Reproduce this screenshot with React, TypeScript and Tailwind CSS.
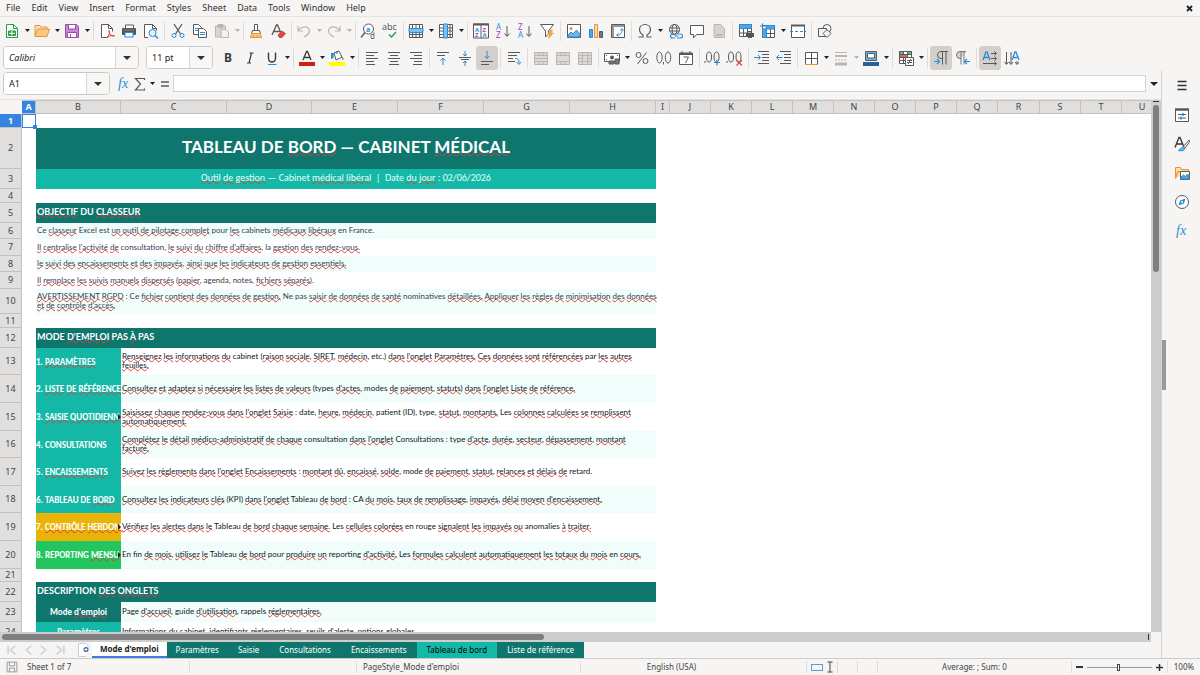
import { Fragment, type ReactNode } from 'react';

const menus = ['File', 'Edit', 'View', 'Insert', 'Format', 'Styles', 'Sheet', 'Data', 'Tools', 'Window', 'Help'];

const INK = '#595959';
const BLUE = '#2a8dd4';
const ORANGE = '#e8923a';
const GRAY = '#b9b7b5';

const icons: Record<string, ReactNode> = {
  new: (
    <>
      <path d="M2.500 1.500h7l4 4v9h-11z" fill="#fff" stroke="#2f9a4c" />
      <path d="M9.500 1.500v4h4" stroke="#2f9a4c" />
      <path d="M4.500 8h7v4.500h-7z" fill="#2f9a4c" stroke="#2f9a4c" />
      <path d="M5 10.300h6M7.800 8v4.500" stroke="#fff" />
    </>
  ),
  open: (
    <>
      <path d="M1 13V2.500h5l1 1.500h6v3" fill="#fbe0b5" stroke={ORANGE} />
      <path d="M1 13.500l2.500-7.500h12l-2.500 7.500z" fill="#f8c983" stroke={ORANGE} />
    </>
  ),
  save: (
    <>
      <path d="M1.500 1.500h11l2 2v11h-13z" fill="#c887d6" stroke="#9d4bb0" />
      <path d="M4.500 1.500h7v4.500h-7zM3.500 9.500h9v5h-9z" fill="#fff" stroke="#9d4bb0" />
      <path d="M6.500 11v3" stroke="#9d4bb0" />
    </>
  ),
  pdf: (
    <>
      <path d="M9 14.500H2.500v-13h7l4 4v3" fill="#fff" stroke={INK} />
      <path d="M9.500 1.500v4h4" stroke={INK} />
      <path d="M7.500 14.500c3-2 3.500-5 2.500-7c-.500 3 2 5.500 5.500 5.500c-3-1-6 0-8 1.500z" stroke="#d93a3a" />
    </>
  ),
  print: (
    <>
      <path d="M4.500 5V2h8v3" fill="#fff" stroke={INK} />
      <rect x="1" y="5" width="14" height="7" rx="1" fill="#555" />
      <rect x="4" y="9.500" width="8" height="4.500" fill="#fff" stroke={BLUE} />
      <path d="M3 7h10" stroke="#888" />
    </>
  ),
  preview: (
    <>
      <path d="M5 14.500H1.500v-13h8l4 4v2" fill="#fff" stroke={INK} />
      <path d="M9.500 1.500v4h4" stroke={INK} />
      <circle cx="9.500" cy="10" r="3.500" fill="#e3f2fc" stroke={BLUE} />
      <path d="M12 12.500l3 3" stroke={BLUE} strokeWidth="1.500" />
    </>
  ),
  cut: (
    <>
      <path d="M4 1l6.500 10M12 1L5.500 11" stroke={INK} strokeWidth="1.300" />
      <circle cx="4" cy="12.500" r="2" stroke={BLUE} />
      <circle cx="12" cy="12.500" r="2" stroke={BLUE} />
    </>
  ),
  copy: (
    <>
      <path d="M1.500 1.500h5l3 3v7h-8z" fill="#fff" stroke={INK} />
      <path d="M3 5.500h3M3 7.500h3" stroke={BLUE} />
      <path d="M6.500 5.500h5l3 3v6h-8z" fill="#fff" stroke={INK} />
      <path d="M8 9.500h5M8 11.500h5" stroke={BLUE} />
    </>
  ),
  paste: (
    <>
      <path d="M1.500 3h10v11h-10z" fill="#d8d6d4" stroke={GRAY} />
      <path d="M4 1.500h5v3H4z" fill={GRAY} stroke={GRAY} />
      <path d="M7 6.500h5l2.500 2.500v5.500H7z" fill="#f2f1f0" stroke={GRAY} />
    </>
  ),
  clone: (
    <>
      <path d="M6.500 1.500h3v6h-3z" fill="#fff" stroke={INK} />
      <path d="M4.500 7.500h7l1 3h-9z" fill="#fff" stroke={INK} />
      <path d="M3.500 10.500h9l1 4H2.500z" fill="#f8c983" stroke={ORANGE} />
      <path d="M6 12v2.500M9 12v2.500" stroke={ORANGE} />
    </>
  ),
  clear: (
    <>
      <path d="M2 12L6.500 2h1L11 10M4 8.500h6" stroke={INK} strokeWidth="1.300" />
      <path d="M8 12l4-4 3.500 2.500-3.500 4H9.500z" fill="#e04444" stroke="#e04444" />
    </>
  ),
  undo: <path d="M2 3v5h5M2 8c3-5 9-5 11-2c1.500 3-1 6-5 8" stroke={GRAY} strokeWidth="1.200" />,
  redo: <path d="M14 3v5H9M14 8c-3-5-9-5-11-2c-1.500 3 1 6 5 8" stroke={GRAY} strokeWidth="1.200" />,
  find: (
    <>
      <circle cx="8.500" cy="6" r="5" fill="#fff" stroke={INK} />
      <path d="M5 9.500L1 14.500" stroke={INK} strokeWidth="1.400" />
      <text x="6" y="8.500" fontSize="7" fill={BLUE} fontWeight="700">a</text>
      <text x="10" y="15.500" fontSize="8" fill={INK}>d</text>
    </>
  ),
  spell: (
    <>
      <text x="0" y="7" fontSize="9" fill={INK}>abc</text>
      <path d="M7 11.500l2.500 2.500 4.500-5" stroke="#2fa05a" strokeWidth="1.500" />
    </>
  ),
  row: (
    <>
      <path d="M1.500 1.500h13v13h-13zM1.500 11.500h13M4.500 1.500v13M8 1.500v13M11.500 1.500v13" fill="#fff" stroke={INK} />
      <path d="M1 5.500h14v4H1z" fill="#7cc0f0" stroke={BLUE} />
    </>
  ),
  column: (
    <>
      <path d="M1.500 1.500h13v13h-13zM1.500 5h13M1.500 8h13M1.500 11.500h13M12 1.500v13" fill="#fff" stroke={INK} />
      <path d="M5.500 1h4v14h-4z" fill="#7cc0f0" stroke={BLUE} />
    </>
  ),
  sort: (
    <>
      <path d="M.500 1h15v14H.500zM8 1v14" fill="#fff" stroke={INK} />
      <path d="M0 1.500h16" stroke={INK} strokeWidth="2" />
      <g fontSize="6" fontWeight="700">
        <text x="2" y="8.500" fill={BLUE}>A</text>
        <text x="2" y="14" fill="#a33fb5">Z</text>
        <text x="9.500" y="8.500" fill="#a33fb5">Z</text>
        <text x="9.500" y="14" fill={BLUE}>A</text>
      </g>
    </>
  ),
  asc: (
    <>
      <text x="1" y="7" fontSize="8" fill={BLUE}>A</text>
      <text x="1" y="15" fontSize="8" fill="#a33fb5">Z</text>
      <path d="M12 3v10M9.500 10.500L12 13.500l2.500-3" stroke={INK} />
    </>
  ),
  desc: (
    <>
      <text x="1" y="7" fontSize="8" fill="#a33fb5">Z</text>
      <text x="1" y="15" fontSize="8" fill={BLUE}>A</text>
      <path d="M12 3v10M9.500 10.500L12 13.500l2.500-3" stroke={INK} />
    </>
  ),
  filter: (
    <>
      <path d="M1.500 1.500h13L9.500 8v3l-3 3V8z" fill="#fff" stroke={INK} />
      <path d="M11.500 7L8.500 11.500h2L9.500 15.500l5-5.500h-2.500l1.500-3z" fill="#f5a84c" stroke={ORANGE} strokeWidth=".6" />
    </>
  ),
  image: (
    <>
      <path d="M1.500 1.500h13v13h-13z" fill="#fff" stroke={INK} />
      <circle cx="5" cy="5.500" r="1.500" fill={ORANGE} />
      <path d="M2 14v-2l3-3 2 2 3.500-4L14 11v3z" fill="#6cb5ea" stroke={BLUE} />
    </>
  ),
  chart: (
    <>
      <path d="M1.500 6.500h3v8h-3z" fill="#4fa5e3" stroke={BLUE} />
      <path d="M6.500 1.500h3v13h-3z" fill="#fbd9ae" stroke={ORANGE} />
      <path d="M11.500 8.500h3v6h-3z" fill="#777" stroke={INK} />
    </>
  ),
  pivot: (
    <>
      <path d="M1.500 1.500h13v13h-13z" fill="#fff" stroke={INK} />
      <path d="M2 3h12M3 2v12" stroke="#999" strokeWidth="2" />
      <path d="M7 12c4 0 5-2 5-6M10.500 7.500L12 5.500l1.500 2M8.500 10.500L6.500 12l2 1.500" stroke={BLUE} />
    </>
  ),
  omega: <path d="M1.500 14H6v-2C3.500 10.500 2.500 9 2.500 6.500C2.500 3.500 5 1.500 8 1.500s5.500 2 5.500 5c0 2.500-1 4-3.500 5.500v2h4.500" stroke={INK} strokeWidth="1.200" />,
  link: (
    <>
      <circle cx="7.500" cy="6.500" r="5" stroke={INK} />
      <ellipse cx="7.500" cy="6.500" rx="2.300" ry="5" stroke={INK} />
      <path d="M2.500 5h10M2.500 8h10" stroke={INK} />
      <path d="M9 11H5.500a2 2 0 0 0 0 4H8M11 11h2.500a2 2 0 0 1 0 4H10M7.500 13h4" stroke={BLUE} strokeWidth="1.200" />
    </>
  ),
  comment: <path d="M1.500 2.500h13v9H7.500l-3 3.500v-3.500h-3z" fill="#fff" stroke={INK} />,
  headers: (
    <>
      <path d="M3 1.500h6.500l4 4v9H3z" fill="#d5d3d1" stroke={GRAY} />
      <path d="M5 11h6.500v2H5z" fill={GRAY} />
    </>
  ),
  range: (
    <>
      <path d="M1.500 1.500h12v12h-12zM1.500 10h12M5.500 1.500v12M9.500 1.500v12" fill="#fff" stroke={INK} />
      <path d="M1.500 1.500h12v4h-12z" fill="#4fa5e3" stroke={BLUE} />
      <path d="M8 10h8v4H8z" fill="#555" />
      <path d="M10 8.500h4M10 14.500h4" stroke={INK} />
    </>
  ),
  freeze: (
    <>
      <path d="M2.500 2.500h12v12h-12zM10.500 2.500v12M6.500 10.500h8" fill="#fff" stroke={INK} />
      <path d="M2.500 6h4v8.500h-4zM6 2.500h8.500V6H6z" fill="#4fa5e3" stroke={BLUE} />
      <path d="M0 3h5M2.500 .500v5" stroke={BLUE} strokeWidth="1.200" />
    </>
  ),
  split: (
    <>
      <path d="M1.500 2.500h13v12h-13z" fill="#fff" stroke={INK} />
      <path d="M1 2.500h14" stroke={INK} strokeWidth="2" />
      <path d="M0 8.500h16" stroke={BLUE} strokeDasharray="3 2" />
    </>
  ),
  shapes: (
    <>
      <circle cx="10" cy="5.500" r="4" fill="#f6f5f4" stroke={INK} />
      <path d="M1.500 5.500h8v8h-8z" fill="#f6f5f4" stroke={INK} />
      <path d="M10 6.500l4 4-4 4-4-4z" fill="#f6f5f4" stroke={INK} />
    </>
  ),
  bold: <text x="4" y="12" fontSize="12" fontWeight="700" fill="#3a3a3a">B</text>,
  italic: <path d="M7.500 3h4M5 13h4M9.500 3L7 13" stroke="#3a3a3a" strokeWidth="1.200" />,
  underline: (
    <>
      <path d="M4.500 2.500v6a3.500 3.500 0 0 0 7 0v-6" stroke="#3a3a3a" strokeWidth="1.400" />
      <path d="M4 14.500h8.500" stroke={BLUE} />
    </>
  ),
  fontColor: (
    <>
      <path d="M4 10L7.500 1.500h1L12 10M5.500 7.500h5" stroke="#3a3a3a" strokeWidth="1.300" />
      <path d="M0 12h16v4H0z" fill="#c9211e" />
    </>
  ),
  highlight: (
    <>
      <path d="M5 3l5-2 3 6-6 3z" fill="#fff" stroke={INK} />
      <path d="M8 4V1M13 7c1 1 1.500 2 .500 3" stroke={INK} />
      <path d="M2 9V3h4L4.500 5v3z" fill={BLUE} />
      <path d="M0 12h16v4H0z" fill="#ffff00" />
    </>
  ),
  left: <path d="M2 2.500h12M2 5.500h8M2 8.500h12M2 11.500h8M2 14.500h9" stroke={INK} />,
  center: <path d="M2 2.500h12M4 5.500h8M2 8.500h12M4 11.500h8M3 14.500h10" stroke={INK} />,
  right: <path d="M2 2.500h12M6 5.500h8M2 8.500h12M6 11.500h8M5 14.500h9" stroke={INK} />,
  top: (
    <>
      <path d="M2 2.500h12M2 5.500h8" stroke={INK} />
      <path d="M8 15V8M5.500 10.500L8 8l2.500 2.500" stroke={BLUE} />
    </>
  ),
  middle: (
    <>
      <path d="M2 7.500h12M4 9.500h8" stroke={INK} />
      <path d="M8 1v5M6 4l2 2 2-2M8 16v-5M6 13l2-2 2 2" stroke={BLUE} />
    </>
  ),
  bottom: (
    <>
      <path d="M2 11.500h12M2 14.500h8" stroke={INK} />
      <path d="M8 1v7.500M5.500 6L8 8.500 10.500 6" stroke={BLUE} />
    </>
  ),
  wrap: (
    <>
      <path d="M2 2.500h12M2 5.500h9M2 8.500h5M2 11.500h7" stroke={INK} />
      <path d="M9 8.500c3 0 4 1 4 5M10.500 12l2.500 2.500L15 12" stroke={BLUE} />
    </>
  ),
  merge1: <path d="M1.500 2.500h13v12h-13zM1.500 5.500h13M1.500 8.500h13M1.500 11.500h13M6 2.500v3M10 2.500v3M6 11.500v3M10 11.500v3" fill="#dddbd9" stroke={GRAY} />,
  merge2: <path d="M1.500 2.500h13v12h-13zM1.500 5.500h13M1.500 11.500h13M6 2.500v3M10 2.500v3M6 11.500v3M10 11.500v3" fill="#dddbd9" stroke={GRAY} />,
  merge3: <path d="M1.500 2.500h13v12h-13zM1.500 5.500h13M1.500 8.500h4M10.500 8.500h4M1.500 11.500h13M5.500 2.500v12M10.500 2.500v12" fill="#dddbd9" stroke={GRAY} />,
  currency: (
    <>
      <path d="M.500 3.500h15v8H.500z" fill="#fff" stroke={INK} />
      <circle cx="8" cy="7.500" r="2" fill={INK} />
      <path d="M2 5.500h1M13 5.500h1M2 9.500h1" stroke={INK} />
      <path d="M5 11h5v3H5zM11 9h4v5h-4z" fill="#777" stroke={INK} />
    </>
  ),
  percent: (
    <>
      <circle cx="4.500" cy="5" r="2.500" stroke={INK} />
      <circle cx="11.500" cy="11" r="2.500" stroke={INK} />
      <path d="M12.500 2.500l-9 11.500" stroke={INK} />
    </>
  ),
  number: (
    <>
      <ellipse cx="3.500" cy="7.500" rx="2.700" ry="5.500" stroke={INK} />
      <ellipse cx="12" cy="7.500" rx="2.700" ry="5.500" stroke={INK} />
      <path d="M7.500 12v2.500" stroke={INK} />
    </>
  ),
  date: (
    <>
      <path d="M1.500 3h13v11.500h-13z" fill="#fff" stroke={INK} />
      <path d="M1.500 4h13" stroke={INK} strokeWidth="2" />
      <path d="M4 1v3M12 1v3M5.500 7h5l-3 6" stroke={INK} />
    </>
  ),
  addDecimal: (
    <>
      <path d="M0 11v2" stroke={INK} />
      <ellipse cx="4" cy="7" rx="2.500" ry="5" stroke={INK} />
      <ellipse cx="11.500" cy="7" rx="2.500" ry="5" stroke={INK} />
      <path d="M9 12.500h6M12 9.500v6" stroke={BLUE} strokeWidth="1.200" />
    </>
  ),
  delDecimal: (
    <>
      <path d="M0 11v2" stroke={INK} />
      <ellipse cx="4" cy="7" rx="2.500" ry="5" stroke={INK} />
      <ellipse cx="11.500" cy="7" rx="2.500" ry="5" stroke={INK} />
      <path d="M9.500 10l5.500 5.500M15 10l-5.500 5.500" stroke="#e04444" strokeWidth="1.200" />
    </>
  ),
  indent: (
    <>
      <path d="M4 1.500h11M8 4.500h7M8 7.500h7M8 10.500h7M4 13.500h11" stroke={INK} />
      <path d="M0 7.500h6M4 5l2.500 2.500L4 10" stroke={BLUE} />
    </>
  ),
  outdent: (
    <>
      <path d="M4 1.500h11M8 4.500h7M8 7.500h7M8 10.500h7M4 13.500h11" stroke={INK} />
      <path d="M6.500 7.500h-6M3 5L.500 7.500 3 10" stroke={BLUE} />
    </>
  ),
  borders: (
    <>
      <path d="M2.500 2.500h12v12h-12zM8.500 2.500v12M2.500 8.500h12" fill="#fff" stroke={INK} />
      <path d="M2 14.500h13" stroke={ORANGE} />
    </>
  ),
  borderStyle: (
    <>
      <path d="M2 2.500h12" stroke={GRAY} />
      <path d="M2 6h12" stroke={GRAY} strokeWidth="2" />
      <path d="M2 10h12" stroke={GRAY} strokeDasharray="2 1" />
      <path d="M2 14h12" stroke={GRAY} strokeWidth="3" />
    </>
  ),
  borderColor: (
    <>
      <path d="M2.500 1.500h11v9h-11z" fill="#6cb5ea" stroke={INK} />
      <path d="M4.500 3.500h7v4.500h-7z" fill="#fff" stroke={INK} />
      <path d="M0 12h16v4H0z" fill="#2a6099" />
    </>
  ),
  conditional: (
    <>
      <path d="M1.500 1.500h12v12h-12zM1.500 7.500h12M1.500 10.500h12M5.500 1.500v12M9.500 1.500v12" fill="#fff" stroke={INK} />
      <path d="M1.500 1.500h4v3h-4zM9.500 1.500h4v3h-4z" fill="#5bbd72" stroke={INK} />
      <path d="M1.500 4.500h8v3h-8z" fill="#e26262" stroke={INK} />
      <path d="M7.500 7.500h8v8h-8z" fill="#fff" stroke={INK} />
      <path d="M9 10.500h5M9 12.500h5M13 9l-3 5" stroke={INK} />
    </>
  ),
  ltr: (
    <>
      <path d="M9.500 14.500v-13M13 14.500v-13M15 1.500H8a3.500 3.500 0 0 0 0 7h1.500" fill="none" stroke={INK} />
      <path d="M1 11.500h5M4 9l2.500 2.500L4 14" stroke={BLUE} strokeWidth="1.200" />
    </>
  ),
  rtl: (
    <>
      <path d="M6 14.500v-13M9 14.500v-13M11 1.500H5a3.500 3.500 0 0 0 0 7h1" fill="#d5d3d1" stroke="#777" />
      <path d="M15 11.500h-5M12 9l-2.500 2.500L12 14" stroke={BLUE} strokeWidth="1.200" />
    </>
  ),
  textH: (
    <>
      <path d="M1 10L4 2h1l3 8M2.500 7.500h4" stroke={BLUE} strokeWidth="1.300" />
      <path d="M9 3.500h5M12.500 1.500l2 2-2 2M9 8.500h5M12.500 6.500l2 2-2 2M1 13.500h13M12.500 11.500l2 2-2 2" stroke={INK} />
    </>
  ),
  textV: (
    <>
      <path d="M8 10l3-8h1l3 8M9.500 7.500h4" stroke={BLUE} strokeWidth="1.300" />
      <path d="M2.500 2v12M.500 12l2 2.500 2-2.500M7 2v12M5 12l2 2.500L9 12M13 11v3M11 12l2 2.500 2-2.500" stroke={INK} />
    </>
  ),
  fx: (
    <text x="2" y="12" fontSize="14" fontStyle="italic" fill={BLUE} fontFamily="Liberation Serif, serif">fx</text>
  ),
  sum: <path d="M12.500 4V2.500H3.500L8.500 8l-5 6h9V12.500" stroke={INK} strokeWidth="1.200" />,
  equals: <path d="M4 6h8M4 10h8" stroke={INK} strokeWidth="1.600" />,
  hamburger: <path d="M3.500 3.500h9M3.500 7.500h9M3.500 11.500h9" stroke="#333" strokeWidth="1.400" />,
  properties: (
    <>
      <path d="M1.500 2.500h13v12h-13z" fill="#fff" stroke={INK} />
      <path d="M1 2.500h14" stroke={INK} strokeWidth="2.500" />
      <path d="M4 7.500h8M4 11h8" stroke={INK} />
      <path d="M9 6v3M7 9.500v3" stroke={BLUE} strokeWidth="1.500" />
    </>
  ),
  styles: (
    <>
      <path d="M1 11.500L5 1.500h1l4 10M2.500 8h6" stroke="#3a3a3a" strokeWidth="1.400" />
      <path d="M15 4l-5.500 6.500 1.500 1.500L15.500 6z" fill="#fff" stroke={INK} />
      <path d="M10 11c-2 0-3 1.500-5.500 3.500c3 .800 6 .300 6.500-2.500z" fill="#6cb5ea" stroke={BLUE} />
    </>
  ),
  gallery: (
    <>
      <path d="M1.500 13.500v-11h5l1 2h7v2" fill="#fbe0b5" stroke={ORANGE} />
      <path d="M1.500 13.500l2-7H6" fill="#f8c983" stroke={ORANGE} />
      <path d="M6.500 6.500h9v8h-9z" fill="#fff" stroke={INK} />
      <path d="M7 14v-2l2.500-2 2 1.500 2-2.500L15 11v3z" fill="#4fa5e3" stroke={BLUE} />
    </>
  ),
  navigator: (
    <>
      <circle cx="8" cy="8" r="6.500" fill="#fff" stroke={INK} />
      <path d="M11.500 4.500L10 9.500 4.500 11.500 6 6.500z" fill={BLUE} />
      <circle cx="8" cy="8" r="1" fill="#fff" />
    </>
  ),
};

function Icon({ name }: { name: string }) {
  return (
    <svg viewBox="0 0 16 16" fill="none" className="h-4 w-4 shrink-0 overflow-visible font-['Noto_Sans',sans-serif]">
      {icons[name]}
    </svg>
  );
}

function Caret({ muted = false }: { muted?: boolean }) {
  return (
    <svg viewBox="0 0 5 3" className="h-[3px] w-[5px] shrink-0">
      <path d="M0 0h5L2.500 3z" fill={muted ? '#b5b3b1' : '#222'} />
    </svg>
  );
}

// name, "v" = with drop-down arrow, "V" = greyed arrow, "on" = pressed
type Tool = [string, ('v' | 'V' | 'on')?];

const standardTools: Tool[][] = [
  [['new', 'v'], ['open', 'v'], ['save', 'v']],
  [['pdf'], ['print'], ['preview']],
  [['cut'], ['copy'], ['paste', 'V']],
  [['clone'], ['clear']],
  [['undo', 'V'], ['redo', 'V']],
  [['find'], ['spell']],
  [['row', 'v'], ['column', 'v']],
  [['sort'], ['asc'], ['desc'], ['filter']],
  [['image'], ['chart'], ['pivot']],
  [['omega', 'v'], ['link'], ['comment'], ['headers']],
  [['range'], ['freeze', 'v'], ['split']],
  [['shapes']],
];

const formattingTools: Tool[][] = [
  [['bold'], ['italic'], ['underline', 'v']],
  [['fontColor', 'v'], ['highlight', 'v']],
  [['left'], ['center'], ['right']],
  [['top'], ['middle'], ['bottom', 'on']],
  [['wrap']],
  [['merge1'], ['merge2'], ['merge3']],
  [['currency', 'v'], ['percent'], ['number'], ['date']],
  [['addDecimal'], ['delDecimal']],
  [['indent'], ['outdent']],
  [['borders', 'v'], ['borderStyle', 'V'], ['borderColor', 'v']],
  [['conditional', 'v']],
  [['ltr', 'on'], ['rtl']],
  [['textH', 'on'], ['textV']],
];

function ToolGroups({ groups, tight = false }: { groups: Tool[][]; tight?: boolean }) {
  return (
    <>
      {groups.map((group, i) => (
        <Fragment key={i}>
          {i > 0 && (
            <span className={`flex justify-center ${tight && group.length === 2 ? 'w-1' : 'w-[5px]'}`}>
              <span className="h-5 w-px bg-[#dedcda]" />
            </span>
          )}
          {group.map(([name, mode]) => (
            <Fragment key={name}>
              <button
                type="button"
                aria-label={name}
                className={`flex h-6 w-[22px] items-center justify-center rounded-[3px] ${mode === 'on' ? 'bg-[#d3d0cc]' : ''}`}
              >
                <Icon name={name} />
              </button>
              {(mode === 'v' || mode === 'V') && (
                <button type="button" aria-label={`${name} options`} className="flex h-6 w-2 items-center justify-center">
                  <Caret muted={mode === 'V'} />
                </button>
              )}
            </Fragment>
          ))}
        </Fragment>
      ))}
    </>
  );
}

function Combo({ label, value, width, italic = false }: { label: string; value: string; width: string; italic?: boolean }) {
  return (
    <div className={`flex h-[23px] shrink-0 overflow-hidden rounded-[4px] border border-[#cdc9c5] bg-white ${width}`}>
      <input aria-label={label} defaultValue={value} className={`min-w-0 flex-1 bg-white pl-[5px] text-[#222] outline-none ${italic ? 'italic' : ''}`} />
      <button type="button" aria-label={`${label} list`} className="flex w-[23px] items-center justify-center border-l border-[#d9d6d3] bg-[#f8f7f6]">
        <svg viewBox="0 0 8 4" className="h-1 w-2">
          <path d="M0 0h8L4 4z" fill="#333" />
        </svg>
      </button>
    </div>
  );
}

// Words between braces get the spell checker's wavy line
function Spelled({ text }: { text: string }) {
  return (
    <>
      {text.split(/[{}]/).map((part, i) =>
        i % 2 ? (
          <span key={i} className="underline decoration-[#d9403a] decoration-wavy decoration-1 [text-decoration-skip-ink:none] [text-underline-offset:-1px]">
            {part}
          </span>
        ) : (
          part
        ),
      )}
    </>
  );
}

const columns: [string, string][] = [
  ['A', 'w-[14px]'], ['B', 'w-[85px]'], ['C', 'w-[106px]'], ['D', 'w-[85px]'], ['E', 'w-[86px]'], ['F', 'w-[86px]'],
  ['G', 'w-[86px]'], ['H', 'w-[86px]'], ['I', 'w-[14px]'], ['J', 'w-[41px]'], ['K', 'w-[41px]'], ['L', 'w-[41px]'],
  ['M', 'w-[41px]'], ['N', 'w-[41px]'], ['O', 'w-[41px]'], ['P', 'w-[41px]'], ['Q', 'w-[41px]'], ['R', 'w-[42px]'],
  ['S', 'w-[41px]'], ['T', 'w-[41px]'], ['U', 'w-[41px]'],
];

interface Row {
  height: string;
  kind?: 'title' | 'subtitle' | 'section' | 'note' | 'step';
  label?: string;
  labelClass?: string;
  lines?: string[];
  tinted?: boolean;
  clipped?: boolean;
}

const TEAL = 'bg-[#14b8a6]';
const DARK = 'bg-[#0f766e]';

const rows: Row[] = [
  { height: 'h-[14px]' },
  { height: 'h-[41px]', kind: 'title', lines: ['TABLEAU DE {BORD} — CABINET {MÉDICAL}'] },
  { height: 'h-[20px]', kind: 'subtitle', lines: ['{Outil} {de} {gestion} — Cabinet {médical} {libéral}  |  Date {du} {jour} : 02/06/2026'] },
  { height: 'h-[14px]' },
  { height: 'h-[20px]', kind: 'section', lines: ['{OBJECTIF} DU {CLASSEUR}'] },
  { height: 'h-[16px]', kind: 'note', tinted: true, lines: ['Ce {classeur} Excel est {un outil de pilotage complet} pour {les} cabinets {médicaux} {libéraux} en France.'] },
  { height: 'h-[17px]', kind: 'note', lines: ["{Il} {centralise} {l'activité} {de} consultation, {le} {suivi} {du} {chiffre} {d'affaires}, la {gestion} {des} {rendez-vous.}"] },
  { height: 'h-[16px]', kind: 'note', tinted: true, lines: ['{le} {suivi} {des} {encaissements} {et} {des} {impayés}, {ainsi} {que} {les} {indicateurs} {de} {gestion} {essentiels.}'] },
  { height: 'h-[17px]', kind: 'note', lines: ['{Il} {remplace} {les} {suivis} {manuels} {dispersés} ({papier}, agenda, notes, {fichiers} {séparés}).'] },
  {
    height: 'h-[25px]', kind: 'note', tinted: true,
    lines: [
      '{AVERTISSEMENT} {RGPD} : Ce {fichier} {contient} {des} {données} {de} {gestion.} Ne pas {saisir} {de} {données} {de} {santé} nominatives {détaillées.} {Appliquer} {les} {règles} {de} {minimisation} {des} {données}',
      "{et} {de} {contrôle} {d'accès.}",
    ],
  },
  { height: 'h-[14px]' },
  { height: 'h-[20px]', kind: 'section', lines: ["MODE {D'EMPLOI} PAS {À} PAS"] },
  {
    height: 'h-[27px]', kind: 'step', label: '1. {PARAMÈTRES}', labelClass: TEAL,
    lines: [
      "{Renseignez} {les} {informations} {du} cabinet ({raison} {sociale}, {SIRET}, {médecin}, etc.) {dans} {l'onglet} {Paramètres.} {Ces} {données} {sont} {référencées} par {les} {autres}",
      '{feuilles.}',
    ],
  },
  {
    height: 'h-[28px]', kind: 'step', label: '2. {LISTE} {DE} {RÉFÉRENCE}', labelClass: TEAL, tinted: true,
    lines: ["{Consultez} {et} {adaptez} {si} {nécessaire} {les} {listes} {de} {valeurs} (types {d'actes}, modes {de} {paiement}, {statuts}) {dans} {l'onglet} {Liste} {de} {référence.}"],
  },
  {
    height: 'h-[28px]', kind: 'step', label: '3. {SAISIE} {QUOTIDIENN}', labelClass: TEAL, clipped: true,
    lines: [
      "{Saisissez} {chaque} {rendez-vous} {dans} {l'onglet} {Saisie} : date, {heure}, {médecin}, patient (ID), type, {statut}, {montants.} Les {colonnes} {calculées} {se} {remplissent}",
      '{automatiquement.}',
    ],
  },
  {
    height: 'h-[27px]', kind: 'step', label: '4. CONSULTATIONS', labelClass: TEAL, tinted: true,
    lines: [
      "{Complétez} {le} {détail} {médico-administratif} {de} {chaque} consultation {dans} {l'onglet} Consultations : type {d'acte}, {durée}, {secteur}, {dépassement}, {montant}",
      '{facturé.}',
    ],
  },
  {
    height: 'h-[28px]', kind: 'step', label: '5. {ENCAISSEMENTS}', labelClass: TEAL,
    lines: ["{Suivez} {les} {règlements} {dans} {l'onglet} {Encaissements} : {montant} {dû}, {encaissé}, {solde}, mode {de} {paiement}, {statut}, {relances} {et} {délais} {de} retard."],
  },
  {
    height: 'h-[27px]', kind: 'step', label: '6. TABLEAU DE {BORD}', labelClass: TEAL, tinted: true,
    lines: ["{Consultez} {les} {indicateurs} {clés} (KPI) {dans} {l'onglet} Tableau {de} {bord} : CA {du} {mois}, {taux} {de} {remplissage}, {impayés}, {délai} {moyen} {d'encaissement.}"],
  },
  {
    height: 'h-[28px]', kind: 'step', label: '7. {CONTRÔLE} {HEBDOM}', labelClass: 'bg-[#eab308]', clipped: true,
    lines: ['{Vérifiez} {les} {alertes} {dans} {le} Tableau {de} {bord} {chaque} {semaine.} Les {cellules} {colorées} en rouge {signalent} {les} {impayés} {ou} anomalies {à} {traiter.}'],
  },
  {
    height: 'h-[28px]', kind: 'step', label: '8. REPORTING {MENSU}', labelClass: 'bg-[#22c55e]', tinted: true, clipped: true,
    lines: ["En fin {de} {mois}, {utilisez} {le} Tableau {de} {bord} pour {produire} {un} reporting {d'activité.} Les {formules} {calculent} {automatiquement} {les} {totaux} {du} {mois} en {cours.}"],
  },
  { height: 'h-[13px]' },
  { height: 'h-[20px]', kind: 'section', lines: ['DESCRIPTION {DES} {ONGLETS}'] },
  { height: 'h-[20px]', kind: 'step', label: "Mode {d'emploi}", labelClass: `${DARK} text-center`, tinted: true, lines: ["Page {d'accueil}, guide {d'utilisation}, rappels {réglementaires.}"] },
  { height: 'h-[20px]', kind: 'step', label: '{Paramètres}', labelClass: `${TEAL} text-center`, lines: ["{Informations} {du} {cabinet}, {identifiants} {réglementaires}, {seuils} {d'alerte}, options {globales.}"] },
];

const bannerClass = {
  title: 'bg-[#0f766e] pb-1 text-center text-[17px] leading-6 font-bold text-white',
  subtitle: "bg-[#14b8a6] pb-0.5 text-center font-['Carlito','Lato',sans-serif] text-[10px] leading-3 text-[#e6fffb]",
  section: 'bg-[#0f766e] pb-0.5 pl-px text-[9px] leading-3 font-bold text-white',
  note: 'pb-px pl-px text-[8px] leading-[9px] text-[#374151]',
};

function SheetCells({ row }: { row: Row }) {
  const { kind, lines = [] } = row;
  if (!kind) return <td colSpan={20} />;

  const body = lines.map((line) => (
    <div key={line} className="whitespace-pre">
      <Spelled text={line} />
    </div>
  ));
  const tint = row.tinted ? 'bg-[#f0fdfa]' : '';

  if (kind !== 'step') {
    return (
      <>
        <td colSpan={7} className={`align-middle ${bannerClass[kind]} ${tint}`}>{body}</td>
        <td colSpan={13} />
      </>
    );
  }
  return (
    <>
      <td className={`relative pb-px align-middle font-['Carlito','Lato',sans-serif] text-[9px] leading-[9px] font-bold text-white ${row.labelClass}`}>
        <div className="whitespace-nowrap">
          <Spelled text={row.label ?? ''} />
        </div>
        {row.clipped && (
          <span className="absolute inset-y-0 right-0 flex items-center">
            <span className="border-y-[3px] border-l-[3px] border-y-transparent border-l-[#222]" />
          </span>
        )}
      </td>
      <td colSpan={6} className={`pb-px pl-px align-middle text-[8px] leading-[9px] text-[#111827] ${tint}`}>{body}</td>
      <td colSpan={13} />
    </>
  );
}

function Sheet() {
  return (
    <table className="w-[1163px] table-fixed border-separate border-spacing-0 font-['Lato',sans-serif]">
      <colgroup>
        <col className="w-[22px]" />
        {columns.map(([letter, width]) => (
          <col key={letter} className={width} />
        ))}
      </colgroup>
      <thead className="font-['Noto_Sans',sans-serif] text-[9px] leading-3">
        <tr className="h-[14px]">
          <td className="bg-[#f6f5f4] p-0" />
          {columns.map(([letter]) => (
            <th
              key={letter}
              scope="col"
              className={`border-y border-r border-[#c3c2c1] p-0 ${letter === 'A' ? 'bg-[#3584e4] font-bold text-white' : 'bg-[#e0dfde] font-normal text-[#444]'}`}
            >
              {letter}
            </th>
          ))}
        </tr>
      </thead>
      <tbody>
        {rows.map((row, i) => (
          <tr key={i} className={row.height}>
            <th
              scope="row"
              className={`border-r border-b border-[#c3c2c1] p-0 font-['Noto_Sans',sans-serif] text-[9px] leading-3 ${i === 0 ? 'bg-[#3584e4] font-bold text-white' : 'bg-[#e0dfde] font-normal text-[#444]'}`}
            >
              {i + 1}
            </th>
            {i === 0 ? (
              <td className="relative border border-[#3584e4] p-0">
                <span className="absolute -right-0.5 -bottom-0.5 h-1 w-1 bg-[#3584e4]" />
              </td>
            ) : (
              <td />
            )}
            <SheetCells row={row} />
          </tr>
        ))}
      </tbody>
    </table>
  );
}

const tabs = [
  { name: 'Paramètres', style: 'bg-[#0f766e] px-[9px] text-white' },
  { name: 'Saisie', style: 'bg-[#0f766e] px-2.5 text-white' },
  { name: 'Consultations', style: 'bg-[#0f766e] px-2.5 text-white' },
  { name: 'Encaissements', style: 'bg-[#0f766e] px-2.5 text-white' },
  { name: 'Tableau de bord', style: 'bg-[#14b8a6] px-2.5 text-black' },
  { name: 'Liste de référence', style: 'bg-[#0f766e] px-2.5 text-white' },
];

function TabBar() {
  return (
    <nav className="flex h-4 items-stretch text-[8px]">
      <div className="flex w-[76px] items-center justify-center gap-1 pr-1">
        {['M2.500 1v10M11 1L5 6l6 5', 'M11 1L5 6l6 5', 'M3 1l6 5-6 5', 'M11.500 1v10M3 1l6 5-6 5'].map((d) => (
          <button key={d} type="button" aria-label="Scroll tabs">
            <svg viewBox="0 0 14 12" fill="none" className="h-3 w-3">
              <path d={d} stroke="#d6d4d2" strokeWidth="2" />
            </svg>
          </button>
        ))}
      </div>
      <button type="button" aria-label="Add sheet" className="flex w-4 items-center justify-center">
        <svg viewBox="0 0 14 16" fill="none" className="h-4 w-[14px]">
          <path d="M9 14.500H1.500v-13H9l2 2v2" fill="#fff" stroke="#d0cecc" />
          <circle cx="9" cy="7.500" r="2.500" fill="#3465a4" />
          <path d="M7.500 7.500h3M9 6v3" stroke="#fff" />
        </svg>
      </button>
      <button type="button" className="border-b-2 border-[#3f7be0] bg-white px-2 font-bold text-[#222]">Mode d'emploi</button>
      {tabs.map(({ name, style }) => (
        <button key={name} type="button" className={style}>{name}</button>
      ))}
    </nav>
  );
}

function StatusBar() {
  return (
    <footer className="flex h-[17px] shrink-0 items-center border-t border-[#cdcbc9] text-[8px] text-[#444]">
      <span className="flex w-6 justify-center">
        <svg viewBox="0 0 16 16" fill="none" className="h-3 w-3">
          <path d="M1.500 1.500h13v13h-13zM4.500 1.500v5h7v-5M4.500 14.500v-5h7v5" stroke="#999" strokeWidth="1.300" />
        </svg>
      </span>
      <span className="w-[166px] border-r border-[#dedcda] pl-[3px]">Sheet 1 of 7</span>
      <span className="w-[167px] border-r border-[#dedcda]">&nbsp;</span>
      <span className="w-[224px] border-r border-[#dedcda] pl-[6px]">PageStyle_Mode d'emploi</span>
      <span className="flex-1 border-r border-[#dedcda] pr-[44px] text-center">English (USA)</span>
      <span className="flex w-[31px] items-center justify-end gap-1 border-r border-[#dedcda] pr-1">
        <span className="h-[7px] w-3 border border-[#5a9fd0]" />
        <svg viewBox="0 0 6 12" className="h-3 w-1.5">
          <path d="M.500 1h5M3 1v10M.500 11h5" stroke="#444" />
        </svg>
      </span>
      <span className="w-5 border-r border-[#dedcda]">&nbsp;</span>
      <span className="w-5 border-r border-[#dedcda]">&nbsp;</span>
      <span className="w-[194px] border-r border-[#dedcda] text-center">Average: ; Sum: 0</span>
      <span className="flex w-24 items-center justify-center gap-1 border-r border-[#dedcda]">
        <button type="button" aria-label="Zoom out" className="flex h-3 w-[7px] items-center">
          <span className="h-0.5 w-full bg-[#333]" />
        </button>
        <input
          type="range"
          aria-label="Zoom"
          defaultValue={49}
          className="h-3 w-[65px] appearance-none bg-transparent [&::-webkit-slider-runnable-track]:h-px [&::-webkit-slider-runnable-track]:bg-[#999] [&::-webkit-slider-thumb]:-mt-[3px] [&::-webkit-slider-thumb]:h-[7px] [&::-webkit-slider-thumb]:w-[3px] [&::-webkit-slider-thumb]:appearance-none [&::-webkit-slider-thumb]:border [&::-webkit-slider-thumb]:border-[#444] [&::-webkit-slider-thumb]:bg-white"
        />
        <button type="button" aria-label="Zoom in">
          <svg viewBox="0 0 7 7" className="h-[7px] w-[7px]">
            <path d="M0 3.500h7M3.500 0v7" stroke="#333" strokeWidth="1.500" />
          </svg>
        </button>
      </span>
      <span className="w-8 text-center">100%</span>
    </footer>
  );
}

export default function App() {
  return (
    <div className="flex h-screen flex-col overflow-hidden bg-[#f6f5f4] font-['Noto_Sans',sans-serif] text-[9px] leading-3 text-[#333]">
      <header className="flex h-[17px] shrink-0 items-center gap-px border-b border-[#e6e4e2] pl-px">
        {menus.map((menu) => (
          <button key={menu} type="button" className="px-[5px]">{menu}</button>
        ))}
        <button type="button" aria-label="Close document" className="mr-[7px] ml-auto">
          <svg viewBox="0 0 7 7" className="h-[7px] w-[7px]">
            <path d="M1 1l5 5M6 1L1 6" stroke="#222" strokeWidth="1.800" />
          </svg>
        </button>
      </header>

      <div className="flex h-[27px] shrink-0 items-center pl-px">
        <ToolGroups groups={standardTools} tight />
      </div>
      <div className="flex h-[27px] shrink-0 items-center pl-[3px]">
        <Combo label="Font name" value="Calibri" width="w-[136px]" italic />
        <div className="mr-1 ml-[7px] flex">
          <Combo label="Font size" value="11 pt" width="w-[67px]" />
        </div>
        <ToolGroups groups={formattingTools} />
      </div>

      <div className="flex min-h-0 flex-1">
        <main className="flex min-w-0 flex-1 flex-col">
          <div className="flex h-[29px] shrink-0 items-start border-b border-[#e6e4e2] pt-px pl-[3px]">
            <Combo label="Cell reference" value="A1" width="w-[107px]" />
            <div className="flex h-[23px] flex-1 items-center pl-[6px]">
              <button type="button" aria-label="Function wizard"><Icon name="fx" /></button>
              <button type="button" aria-label="Sum"><Icon name="sum" /></button>
              <button type="button" aria-label="Sum options" className="flex w-2 justify-center"><Caret /></button>
              <button type="button" aria-label="Formula" className="ml-px flex w-[16px] justify-center"><Icon name="equals" /></button>
              <input aria-label="Formula input" className="h-[17px] min-w-0 flex-1 border border-[#d5d3d0] bg-white outline-none" />
              <button type="button" aria-label="Expand formula bar" className="flex w-[15px] justify-center">
                <svg viewBox="0 0 8 4" className="h-1 w-2">
                  <path d="M0 0h8L4 4z" fill="#222" />
                </svg>
              </button>
            </div>
          </div>

          <div className="flex min-h-0 flex-1">
            <div className="min-w-0 flex-1 overflow-hidden bg-white">
              <Sheet />
            </div>
            <div className="flex w-[10px] flex-col items-center gap-[3px] bg-[#cecdcd] pt-px">
              <span className="h-px w-1.5 bg-[#333]" />
              <span className="h-[167px] w-[6px] rounded-full bg-[#7f7f7f]" />
            </div>
          </div>
          <div className="mr-[10px] flex h-[10px] shrink-0 items-center justify-between bg-[#cecdcd] px-0.5">
            <span className="h-[6px] w-[542px] rounded-full bg-[#7f7f7f]" />
            <span className="h-1.5 w-px bg-[#333]" />
          </div>
          <TabBar />
        </main>
        <aside className="flex w-[39px] shrink-0 border-l border-[#d5d3d1]">
          <span className="h-[50px] w-1 self-center bg-[#9a9998]" />
          <div className="flex flex-1 flex-col items-center gap-[13px] pt-[7px] pr-[2px]">
            {['hamburger', 'properties', 'styles', 'gallery', 'navigator', 'fx'].map((name) => (
              <button key={name} type="button" aria-label={name}><Icon name={name} /></button>
            ))}
          </div>
        </aside>
      </div>

      <StatusBar />
    </div>
  );
}
